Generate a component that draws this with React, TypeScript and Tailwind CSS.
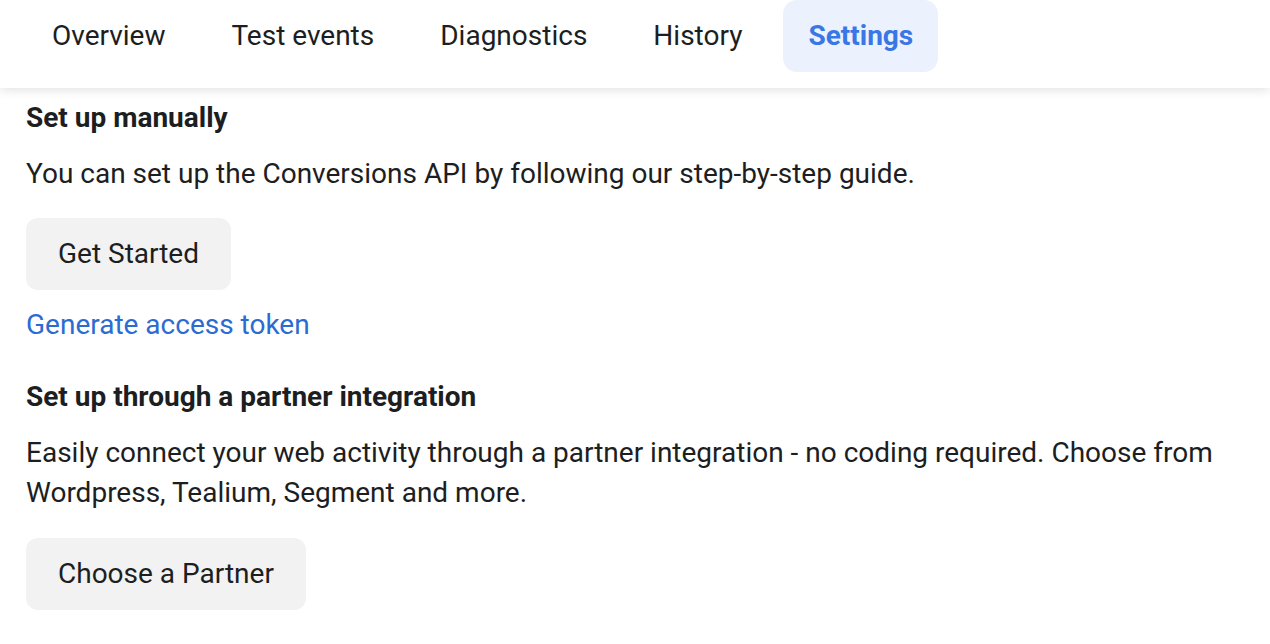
const tabs = ['Overview', 'Test events', 'Diagnostics', 'History', 'Settings'];

function Tab({ label, active }: { label: string; active: boolean }) {
  return (
    <div
      className={`h-[72px] px-[25px] flex items-center rounded-[14px] text-[28px] ${
        active ? 'bg-[#ebf2fd] text-[#3a77e6] font-bold' : 'text-[#1c1e21]'
      }`}
    >
      {label}
    </div>
  );
}

function GreyButton({ children }: { children: string }) {
  return (
    <button className="h-[72px] px-[32px] rounded-[12px] bg-[#f2f2f2] text-[28px] text-[#1c1e21]">
      {children}
    </button>
  );
}

export default function App() {
  return (
    <div className="w-[1270px] h-[644px] bg-white overflow-hidden font-['Roboto',sans-serif] text-[#1c1e21]">
      <div className="h-[88px] flex items-start gap-[16px] pl-[27px] bg-white shadow-[0_2px_10px_rgba(0,0,0,0.12)] relative">
        {tabs.map((t) => (
          <Tab key={t} label={t} active={t === 'Settings'} />
        ))}
      </div>

      <div className="px-[26px]">
        <h2 className="text-[28px] font-bold leading-[40px] mt-[10px]">Set up manually</h2>
        <p className="text-[28px] leading-[40px] mt-[16px]">
          You can set up the Conversions API by following our step-by-step guide.
        </p>
        <div className="mt-[24px]">
          <GreyButton>Get Started</GreyButton>
        </div>
        <a className="block text-[28px] leading-[40px] text-[#2b6bd2] mt-[15px]">Generate access token</a>

        <h2 className="text-[28px] font-bold leading-[40px] mt-[32px]">Set up through a partner integration</h2>
        <p className="text-[28px] leading-[40px] mt-[16px]">
          Easily connect your web activity through a partner integration - no coding required. Choose from Wordpress,
          Tealium, Segment and more.
        </p>
        <div className="mt-[25px]">
          <GreyButton>Choose a Partner</GreyButton>
        </div>
      </div>
    </div>
  );
}
